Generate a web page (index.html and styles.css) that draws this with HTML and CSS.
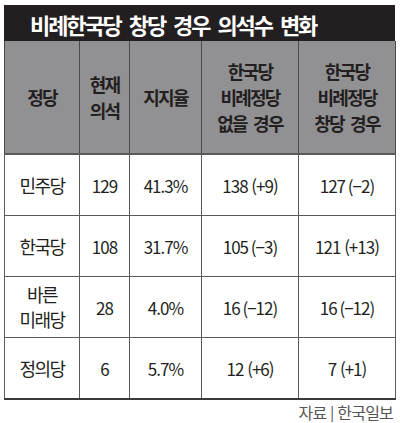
FILE: index.html
```html
<!DOCTYPE html>
<html lang="ko">
<head>
<meta charset="utf-8">
<link rel="stylesheet" href="styles.css">
</head>
<body>
<div class="wrap">
  <div class="title">비례한국당 창당 경우 의석수 변화</div>
  <table class="grid">
    <colgroup>
      <col class="c1"><col class="c2"><col class="c3"><col class="c4"><col class="c5">
    </colgroup>
    <thead>
      <tr>
        <th>정당</th>
        <th>현재<br>의석</th>
        <th>지지율</th>
        <th>한국당<br>비례정당<br>없을 경우</th>
        <th>한국당<br>비례정당<br>창당 경우</th>
      </tr>
    </thead>
    <tbody>
      <tr><td class="party">민주당</td><td>129</td><td>41.3%</td><td>138 (+9)</td><td>127 (−2)</td></tr>
      <tr><td class="party">한국당</td><td>108</td><td>31.7%</td><td>105 (−3)</td><td>121 (+13)</td></tr>
      <tr><td class="party two">바른<br>미래당</td><td>28</td><td>4.0%</td><td>16 (−12)</td><td>16 (−12)</td></tr>
      <tr class="last"><td class="party">정의당</td><td>6</td><td>5.7%</td><td>12 (+6)</td><td>7 (+1)</td></tr>
    </tbody>
  </table>
  <div class="source">자료 | 한국일보</div>
</div>
</body>
</html>
```

FILE: styles.css
```css
html, body {
  margin: 0;
  padding: 0;
  background: #ffffff;
}
body {
  font-family: "Noto Sans CJK KR", "Noto Sans", sans-serif;
  color: #231f20;
}
.wrap {
  width: 391px;
  margin: 5px 0 0 4px;
}
.title {
  height: 36px;
  background: #231f20;
  color: #ffffff;
  font-weight: 700;
  font-size: 22px;
  letter-spacing: -2.1px;
  word-spacing: 4px;
  line-height: 38px;
  padding-left: 26px;
  overflow: hidden;
}
.grid {
  width: 391px;
  border-collapse: collapse;
  table-layout: fixed;
}
.c1 { width: 75px; }
.c2 { width: 50px; }
.c3 { width: 72px; }
.c4 { width: 97px; }
.c5 { width: 97px; }
.grid th {
  background: #919193;
  height: 112px;
  font-weight: 700;
  font-size: 18px;
  line-height: 26px;
  letter-spacing: -1.8px;
  word-spacing: 3px;
  border-left: 1px solid #4a4a4a;
  border-right: 1px solid #4a4a4a;
  border-bottom: 2px solid #5a5a5a;
  padding: 0;
  text-align: center;
  vertical-align: middle;
}
.grid td {
  height: 60px;
  font-size: 17px;
  letter-spacing: -1px;
  text-align: center;
  vertical-align: middle;
  padding: 0;
  border: 1px solid #5a5a5a;
  line-height: 25px;
}
.grid tr.last td {
  border-bottom: 2px solid #3a3a3a;
}
.grid td.party {
  font-size: 18px;
  letter-spacing: -1.5px;
}
.source {
  text-align: right;
  font-size: 16px;
  line-height: 20px;
  color: #555;
  letter-spacing: -0.8px;
  padding-top: 2px;
  padding-right: 2px;
}
```
